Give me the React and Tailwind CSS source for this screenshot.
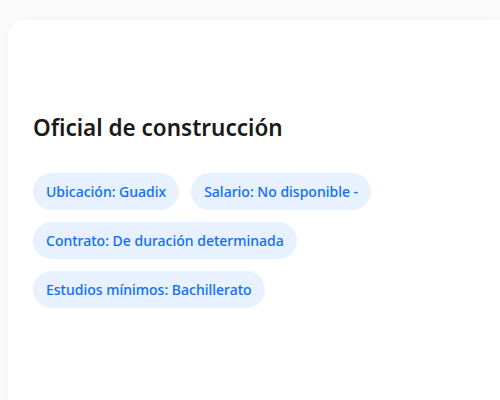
import React from 'react';

const tags = [
  'Ubicación: Guadix',
  'Salario: No disponible -',
  'Contrato: De duración determinada',
  'Estudios mínimos: Bachillerato',
];

const JobCard = () => {
  return (
    <div className="min-h-screen bg-[#fafafa] pl-2 pt-5 font-['Noto_Sans',sans-serif]">
      <div className="min-h-[400px] rounded-tl-2xl bg-white pl-[25px] pt-[93px] shadow-[0_0_10px_rgba(0,0,0,0.03)]">
        <h1 className="text-[22.5px] font-semibold leading-[30px] text-[#1a1a1a]">
          Oficial de construcción
        </h1>
        <div className="mt-[30px] flex max-w-[360px] flex-wrap gap-3">
          {tags.map((tag) => (
            <span
              key={tag}
              className="rounded-full bg-[#e7f1ff] px-[13px] py-[8px] text-[14px] font-medium leading-[21px] text-[#0d6efd]"
            >
              {tag}
            </span>
          ))}
        </div>
      </div>
    </div>
  );
};

export default function App() {
  return <JobCard />;
}
